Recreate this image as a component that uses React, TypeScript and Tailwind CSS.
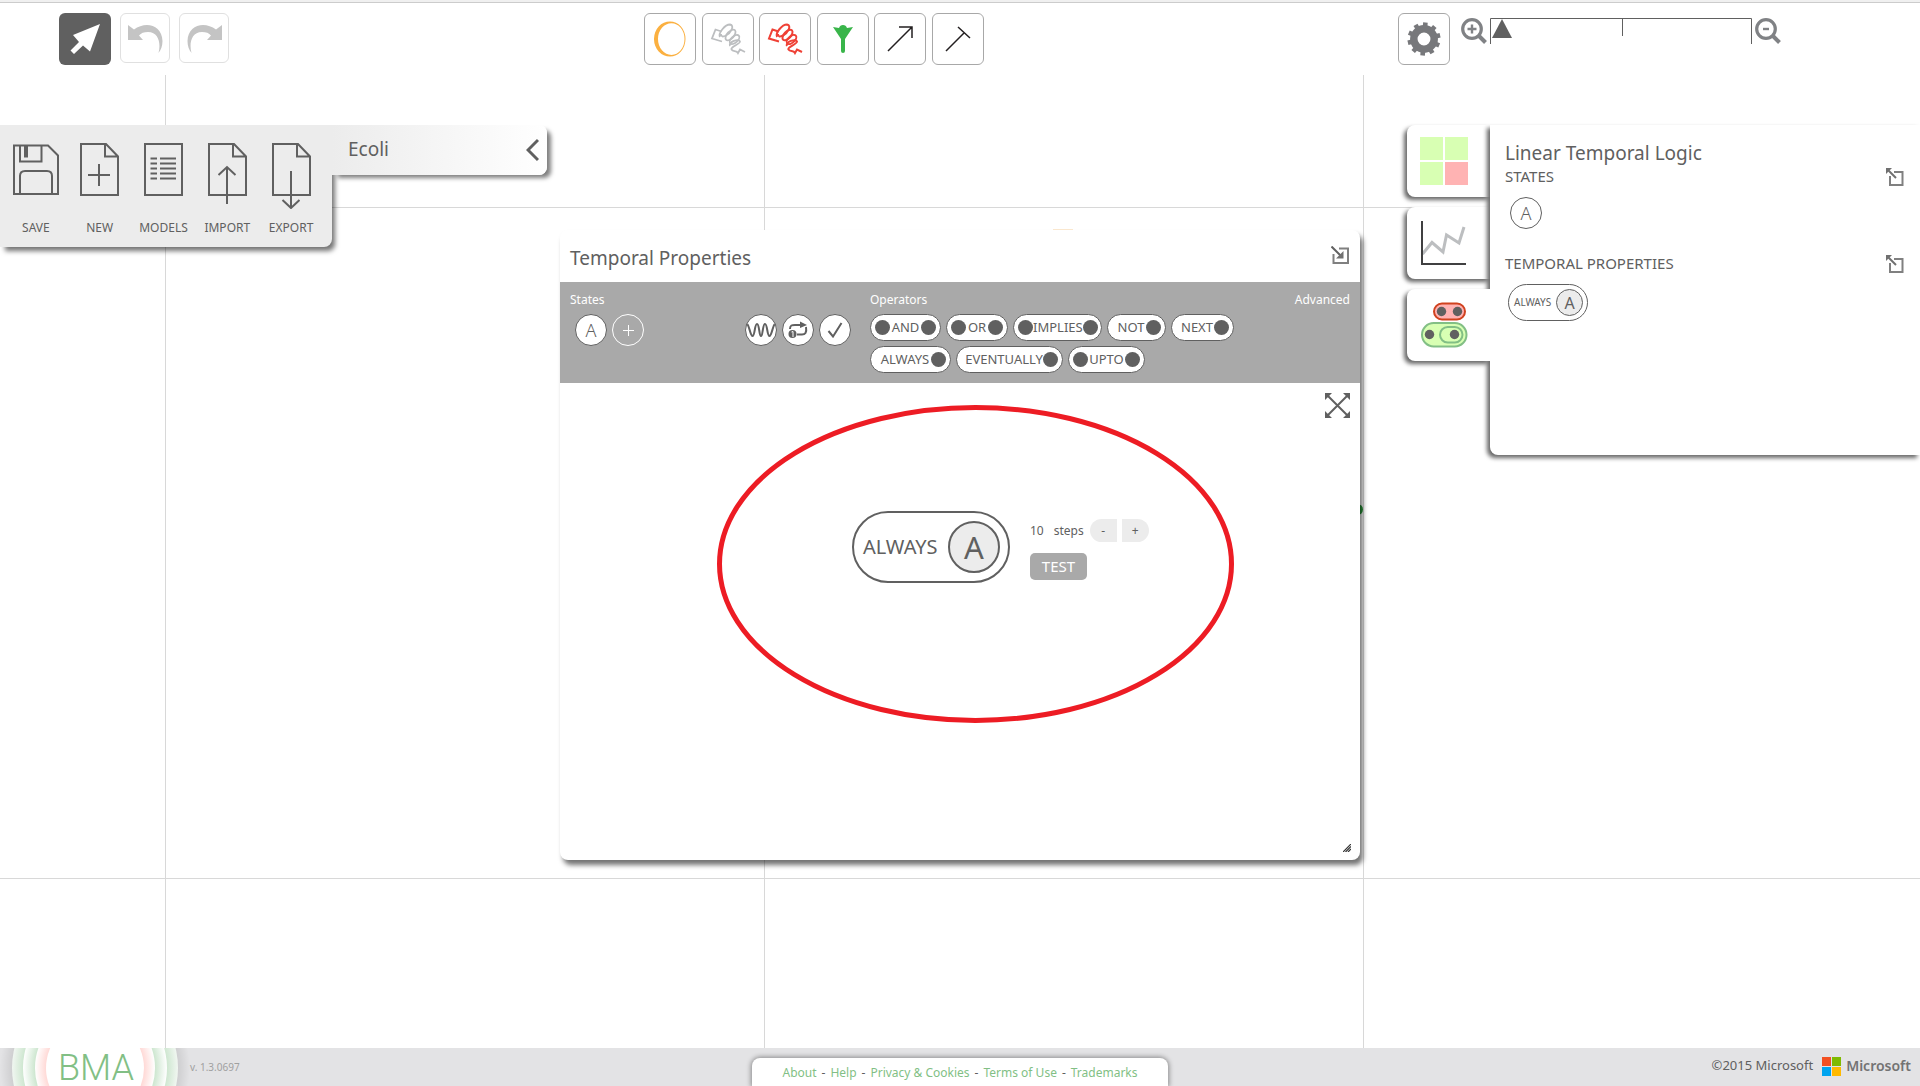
import React from "react";

const GREY = "#606060";

function Svg({ w, h, vb, children }: { w: number; h: number; vb?: string; children: React.ReactNode }) {
  return (
    <svg width={w} height={h} viewBox={vb ?? `0 0 ${w} ${h}`} fill="none" aria-hidden="true" className="block shrink-0">
      {children}
    </svg>
  );
}

/* ---------- toolbar ---------- */

function Spring({ color, weight }: { color: string; weight: number }) {
  return (
    <Svg w={36} h={32} vb="-1 -1 36 32">
      <g stroke={color} strokeWidth={weight}>
        <path d="M11 17.500 L1 14.500 L4.500 5.500 L10.500 7.500" />
        <path d="M9 13 C7 9 14 0.500 19 0.500 C24 1.500 20 9 15 11.500 C12 13 10 13 10 10" />
        <ellipse cx="19.500" cy="11" rx="6.500" ry="3.400" transform="rotate(-48 19.500 11)" />
        <ellipse cx="23.500" cy="15.500" rx="5.800" ry="3.200" transform="rotate(-42 23.500 15.500)" />
        <path d="M19 22 C17 18 28 14 29 17.500 C29.500 20 19 23 20.500 25.500 C22 28 25.500 26 27 29 L29 25.500 L34 28" />
      </g>
    </Svg>
  );
}

const TOOLS: { label: string; icon: React.ReactNode }[] = [
  {
    label: "Cell",
    icon: (
      <Svg w={32} h={36}>
        <path fillRule="evenodd" d="M16 0.5 A16 17.5 0 1 0 16 35.500 A15.500 17.500 0 1 0 16 0.500 Z M17.500 2.200 A13 15.900 0 1 1 17.500 34 A13.500 15.900 0 1 1 17.500 2.200 Z" fill="#fbb040" />
      </Svg>
    ),
  },
  { label: "Inactive receptor", icon: <Spring color="#bcbec0" weight={1.8} /> },
  { label: "Active receptor", icon: <Spring color="#ef4136" weight={2} /> },
  {
    label: "Membrane receptor",
    icon: (
      <Svg w={20} h={28}>
        <path d="M0 2 L6 3 Q7 0 10 0 Q13 0 14 3 L20 2 L12 14 V26 Q12 28 10 28 Q8 28 8 26 V14 Z" fill="#39b54a" />
      </Svg>
    ),
  },
  { label: "Activator", icon: <Svg w={26} h={26}><path d="M1 25 L25 1 M12 1 H25 V12" stroke="#231f20" strokeWidth="1.500" /></Svg> },
  { label: "Inhibitor", icon: <Svg w={26} h={26}><path d="M1 25 L19 7 M13 1 L25 12" stroke="#231f20" strokeWidth="1.500" /></Svg> },
];

function Gear() {
  return (
    <Svg w={34} h={34} vb="-17 -17 34 34">
      <circle r="10.200" stroke="#77787b" strokeWidth="7.500" />
      {[0, 36, 72, 108, 144, 180, 216, 252, 288, 324].map((a) => (
        <rect key={a} x="-2.300" y="-16.500" width="4.600" height="5" fill="#77787b" transform={`rotate(${a + 5})`} />
      ))}
    </Svg>
  );
}

function Magnifier({ plus }: { plus?: boolean }) {
  return (
    <Svg w={26} h={26}>
      <circle cx="11" cy="11" r="9.300" stroke="#808285" strokeWidth="3.200" />
      <path d={plus ? "M6.500 11 H15.500 M11 6.500 V15.500" : "M8 11 H14"} stroke="#808285" strokeWidth="2.400" />
      <path d="M17.500 17.500 L24.500 24.500" stroke="#808285" strokeWidth="4" />
    </Svg>
  );
}

const CURVED_ARROW = "M0 1 L6 5.500 C17 -3 34 0 34.500 17 C34.500 22 33 26 30.500 29 C33 20 31 8 20 8 C16 8 13 9 11 11.500 L15 16 H0 Z";

function TopBar() {
  return (
    <header className="grid h-[75px] grid-cols-[644fr_754fr_522fr] grid-rows-[1px_1fr] items-start border-t-2 border-[#f0f0f0] bg-white">
      <div className="col-span-3 h-px w-full bg-[#cccccc]" />
      <div className="flex gap-[9px] pt-2.5 pl-[59px]">
        <button aria-label="Select" className="flex size-[52px] items-center justify-center rounded-md bg-[#606060]">
          <Svg w={30} h={30}>
            <path d="M30 0 L20 27.500 L13 21.500 L4 30 L0.500 26.500 L9 18 L3 11 Z" fill="#fff" />
          </Svg>
        </button>
        <button aria-label="Undo" className="flex size-[50px] items-center justify-center rounded-md border border-[#e0e0e0]">
          <Svg w={35} h={29}>
            <path d={CURVED_ARROW} fill="#c4c4c4" />
          </Svg>
        </button>
        <button aria-label="Redo" className="flex size-[50px] items-center justify-center rounded-md border border-[#e0e0e0]">
          <Svg w={35} h={29}>
            <path transform="translate(35 0) scale(-1 1)" d={CURVED_ARROW} fill="#c4c4c4" />
          </Svg>
        </button>
      </div>
      <div className="flex w-[340px] justify-between pt-2.5">
        {TOOLS.map((t) => (
          <button key={t.label} aria-label={t.label} className="flex size-[52px] items-center justify-center rounded-md border border-[#a8a8a8]">
            {t.icon}
          </button>
        ))}
      </div>
      <div className="flex pt-2.5">
        <button aria-label="Settings" className="flex size-[52px] items-center justify-center rounded-md border border-[#a8a8a8]">
          <Gear />
        </button>
        <div className="ml-[11px] flex items-start gap-[3px] pt-[5px]">
          <button aria-label="Zoom in"><Magnifier plus /></button>
          <Svg w={262} h={26}>
            <path d="M0.500 26 V0.500 H261.500 V26 M132.500 0.500 V18" stroke={GREY} />
            <path d="M12 1 L22 20 H2 Z" fill={GREY} />
          </Svg>
          <button aria-label="Zoom out"><Magnifier /></button>
        </div>
      </div>
    </header>
  );
}

/* ---------- model panel ---------- */

const PAGE = "M1 1 H26 L38 13.500 V52 H1 Z M25 1 V13.500 H38";

const ACTIONS: { label: string; icon: React.ReactNode }[] = [
  {
    label: "SAVE",
    icon: (
      <Svg w={46} h={66}>
        <path d="M1 2.500 H35 L45 12.500 V51 H1 Z M7 2.500 V18.500 H28.500 V2.500 M7 51 V33 Q7 28 12 28 H34 Q39 28 39 33 V51" stroke={GREY} strokeWidth="2" />
        <path d="M13 2.500 V14.500" stroke={GREY} strokeWidth="4" />
      </Svg>
    ),
  },
  { label: "NEW", icon: <Svg w={39} h={66}><path d={PAGE + " M8 32 H30 M19 21 V43"} stroke={GREY} strokeWidth="2" /></Svg> },
  {
    label: "MODELS",
    icon: (
      <Svg w={39} h={66}>
        <path d="M1 1 H38 V52 H1 Z M6.500 15.500 H13 M16 15.500 H32 M6.500 20.500 H13 M16 20.500 H32 M6.500 25.500 H13 M16 25.500 H32 M6.500 30.500 H13 M16 30.500 H32 M6.500 35.500 H13 M16 35.500 H32" stroke={GREY} strokeWidth="2" />
      </Svg>
    ),
  },
  { label: "IMPORT", icon: <Svg w={39} h={66}><path d={PAGE + " M19 61 V24 M10.500 32 L19 24 L27.500 32"} stroke={GREY} strokeWidth="2" /></Svg> },
  { label: "EXPORT", icon: <Svg w={39} h={66}><path d={PAGE + " M19 28 V65 M10.500 57 L19 65 L27.500 57"} stroke={GREY} strokeWidth="2" /></Svg> },
];

function ModelPanel() {
  return (
    <section className="relative z-10 flex w-[547px] shrink-0 items-start">
      <div className="z-10 grid h-[122px] w-[332px] grid-cols-5 rounded-br-lg bg-[#ececec] pr-[9px] pl-1 shadow-[4px_5px_5px_-1px_rgba(0,0,0,0.55)]">
        {ACTIONS.map((a) => (
          <button key={a.label} className="flex flex-col items-center pt-[18px] text-xs leading-4">
            {a.icon}
            <span className="mt-[11px]">{a.label}</span>
          </button>
        ))}
      </div>
      <div className="relative z-10 flex h-[50px] flex-1 items-center justify-between rounded-r-lg bg-linear-to-r from-[#ececec] to-white pr-2 pl-4 shadow-[5px_4px_4px_-1px_rgba(0,0,0,0.5)]">
        <h1 className="pb-[2px] text-[19px] leading-6">Ecoli</h1>
        <button aria-label="Collapse panel">
          <Svg w={13} h={24}><path d="M12 2 L2 12 L12 22" stroke={GREY} strokeWidth="3" /></Svg>
        </button>
      </div>
    </section>
  );
}

/* ---------- temporal properties window ---------- */

type Op = { name: string; width: string; left: boolean };
const OPERATORS: Op[][] = [
  [
    { name: "AND", width: "w-[71px]", left: true },
    { name: "OR", width: "w-[62px]", left: true },
    { name: "IMPLIES", width: "w-[89px]", left: true },
    { name: "NOT", width: "w-[59px]", left: false },
    { name: "NEXT", width: "w-[63px]", left: false },
  ],
  [
    { name: "ALWAYS", width: "w-[81px]", left: false },
    { name: "EVENTUALLY", width: "w-[107px]", left: false },
    { name: "UPTO", width: "w-[77px]", left: true },
  ],
];

function Dot() {
  return <span className="size-[15px] shrink-0 rounded-full bg-[#606060]" />;
}

function Round({ label, children, outline }: { label: string; children: React.ReactNode; outline?: boolean }) {
  return (
    <button
      aria-label={label}
      className={
        outline
          ? "flex size-8 items-center justify-center rounded-full border border-white text-white"
          : "flex size-8 items-center justify-center overflow-hidden rounded-full border border-[#606060] bg-white"
      }
    >
      {children}
    </button>
  );
}

function OperatorBar() {
  return (
    <div className="flex h-[101px] bg-[#a9a9a9] pt-2 pr-[10px] pl-[10px]">
      <div className="w-[175px]">
        <h3 className="text-xs leading-5 text-white">States</h3>
        <div className="mt-1 flex gap-[5px] pl-[5px]">
          <Round label="State A"><span className="text-lg font-light">A</span></Round>
          <Round label="Add state" outline>
            <Svg w={11} h={11}><path d="M0 5.500 H11 M5.500 0 V11" stroke="#fff" /></Svg>
          </Round>
        </div>
      </div>
      <div className="flex w-[125px] gap-[5px] pt-6">
        <Round label="Oscillation">
          <Svg w={30} h={16}>
            <path d="M0 2 C3 0 4 14 6.500 14 C9 14 8.500 2 11 2 C13.500 2 13 14 15 14 C17 14 16.500 2 19 2 C21.500 2 21 14 23.500 14 C26 14 27 0 30 2" stroke={GREY} strokeWidth="2" />
          </Svg>
        </Round>
        <Round label="Self loop">
          <Svg w={20} h={18}>
            <path d="M2 8 C2 4 4 4 7 4 H13 M18 6 C19 12 17 13.500 14 13.500 H9" stroke={GREY} strokeWidth="2" />
            <path d="M12 0.500 L19 4 L12 7 Z" fill={GREY} />
            <circle cx="4.500" cy="13" r="4" fill={GREY} />
            <path d="M3.500 11 L5 10.500 V16" stroke="#fff" />
          </Svg>
        </Round>
        <Round label="Fixed point">
          <Svg w={16} h={16}><path d="M1.500 9 L6 14.500 L14.500 1" stroke={GREY} strokeWidth="2" /></Svg>
        </Round>
      </div>
      <div className="flex-1">
        <div className="flex justify-between text-xs leading-5 text-white">
          <h3>Operators</h3>
          <button>Advanced</button>
        </div>
        <div className="mt-1 flex flex-col gap-[5px]">
          {OPERATORS.map((row) => (
            <div key={row[0].name} className="flex gap-[5px]">
              {row.map((op) => (
                <button
                  key={op.name}
                  className={`${op.width} ${op.left ? "pl-1" : "pl-2"} flex h-[27px] items-center justify-between rounded-full border border-[#606060] bg-white pr-1 pb-px text-[13px] leading-4`}
                >
                  {op.left && <Dot />}
                  <span className="flex-1 text-center whitespace-nowrap">{op.name}</span>
                  <Dot />
                </button>
              ))}
            </div>
          ))}
        </div>
      </div>
    </div>
  );
}

function PropertiesWindow() {
  return (
    <section className="mt-[105px] mr-[47px] ml-[13px] flex h-[630px] min-w-0 flex-1 flex-col rounded-lg bg-white shadow-[3px_5px_5px_rgba(0,0,0,0.55)]">
      <div className="flex h-[52px] items-start justify-between pt-3 pr-[11px] pl-[10px]">
        <h2 className="text-[19px] leading-8">Temporal Properties</h2>
        <button aria-label="Collapse window" className="pt-1">
          <Svg w={18} h={18}>
            <path d="M8 2.500 H17 V17 H2.500 V8" stroke="#808080" strokeWidth="2" />
            <path d="M0.500 0.500 L10 10" stroke="#606060" strokeWidth="2" />
            <path d="M12.500 5 V12.500 H5 Z" fill="#707070" />
          </Svg>
        </button>
      </div>
      <OperatorBar />
      <div className="relative flex-1">
        <button aria-label="Fit to view" className="absolute top-[10px] right-[10px]">
          <Svg w={25} h={25}>
            <path d="M3 3 L22 22 M22 3 L3 22" stroke={GREY} strokeWidth="2" />
            <path d="M0 0 H7 L0 7 Z M25 0 V7 L18 0 Z M0 25 V18 L7 25 Z M25 25 H18 L25 18 Z" fill={GREY} />
          </Svg>
        </button>
        <svg className="pointer-events-none absolute top-[21px] left-[157px]" width="518" height="320" viewBox="0 0 518 320" fill="none" aria-hidden="true">
          <ellipse cx="258.500" cy="160" rx="256" ry="156.500" stroke="#ed1c24" strokeWidth="5" />
        </svg>
        <div className="flex items-start gap-5 pt-[128px] pl-[292px]">
          <div className="flex h-[72px] w-[158px] items-center justify-between rounded-full border-2 border-[#606060] pr-2 pl-[9px]">
            <span className="text-xl">ALWAYS</span>
            <span className="flex size-[52px] items-center justify-center rounded-full border-2 border-[#606060] bg-[#ececec] text-[31px]">A</span>
          </div>
          <div className="pt-2">
            <div className="flex items-center text-xs leading-[23px]">
              <span>10</span>
              <span className="ml-[10px]">steps</span>
              <button aria-label="Fewer steps" className="ml-[6px] h-[23px] w-[27px] rounded-l-full bg-[#ececec]">-</button>
              <button aria-label="More steps" className="ml-[5px] h-[23px] w-[27px] rounded-r-full bg-[#ececec]">+</button>
            </div>
            <button className="mt-[11px] h-[27px] w-[57px] rounded-[5px] bg-[#a9a9a9] text-[15px] text-white">TEST</button>
          </div>
        </div>
        <div className="absolute right-[9px] bottom-2">
          <Svg w={8} h={8}><path d="M0 8 L8 0 M2.500 8 L8 2.500 M5 8 L8 5" stroke="#333" strokeWidth="1.200" /></Svg>
        </div>
      </div>
    </section>
  );
}

/* ---------- logic panel ---------- */

function ExpandButton({ label }: { label: string }) {
  return (
    <button aria-label={label}>
      <Svg w={18} h={18}>
        <path d="M8 4 H16.500 V17 H4 V8" stroke="#808080" strokeWidth="2" />
        <path d="M2 2 L10 10" stroke="#707070" strokeWidth="2" />
        <path d="M0 0 H6 L0 6 Z" fill="#707070" />
      </Svg>
    </button>
  );
}

const TAB = "flex h-[72px] items-center rounded-l-lg bg-white pl-[13px]";
const TAB_SHADOW = "shadow-[-3px_3px_4px_rgba(0,0,0,0.6)]";

function LogicPanel() {
  return (
    <section className="flex w-[513px] shrink-0 items-start">
      <div className="flex w-[83px] flex-col gap-[10px]">
        <button aria-label="Proof" className={`${TAB} ${TAB_SHADOW}`}>
          <Svg w={48} h={48}>
            <path d="M0 0 H23 V23 H0 Z M25 0 H48 V23 H25 Z M0 25 H23 V48 H0 Z" fill="#d8ffb3" />
            <path d="M25 25 H48 V48 H25 Z" fill="#ffb3b3" />
          </Svg>
        </button>
        <button aria-label="Simulation" className={`${TAB} ${TAB_SHADOW}`}>
          <Svg w={48} h={46}>
            <path d="M2.500 34 L12 22.500 L23 32 L26.500 15 L39 23 L44 7" stroke="#bcbec0" strokeWidth="3" />
            <path d="M2 1 V44 H46" stroke="#404041" strokeWidth="2" />
          </Svg>
        </button>
        <button aria-label="Linear temporal logic" className={`${TAB} ${TAB_SHADOW}`}>
          <Svg w={48} h={46}>
            <rect x="14" y="1.500" width="31" height="16" rx="8" fill="#ffb3b3" stroke="#d0421f" strokeWidth="2" />
            <circle cx="21.500" cy="9.500" r="4.700" fill={GREY} />
            <circle cx="37.500" cy="9.500" r="4.700" fill={GREY} />
            <rect x="2" y="21" width="44.500" height="23.500" rx="11.700" fill="#d8ffb3" stroke="#82bf85" strokeWidth="2" />
            <rect x="20" y="25" width="22.500" height="15.500" rx="7.700" stroke="#82bf85" strokeWidth="2" />
            <circle cx="9.500" cy="32.500" r="4.700" fill={GREY} />
            <circle cx="34.500" cy="32.500" r="4.700" fill={GREY} />
          </Svg>
        </button>
      </div>
      <div className="relative flex-1">
        <div className="absolute top-[164px] -left-2 h-[72px] w-2 bg-white" />
        <div className="h-[330px] rounded-bl-lg bg-white pt-3 pr-4 pl-[15px] shadow-[-3px_3px_4px_rgba(0,0,0,0.6)]">
          <h2 className="pt-[2px] text-[19px] leading-7">Linear Temporal Logic</h2>
          <div className="flex items-center justify-between text-[15px] leading-[18px]">
            <h3 className="pb-[2px]">STATES</h3>
            <ExpandButton label="Expand states" />
          </div>
          <div className="mt-[10px] ml-[5px] flex size-8 items-center justify-center rounded-full border border-[#606060] text-lg font-light">A</div>
          <div className="mt-[25px] flex items-center justify-between text-[15px] leading-[18px]">
            <h3 className="pb-[2px]">TEMPORAL PROPERTIES</h3>
            <ExpandButton label="Expand temporal properties" />
          </div>
          <div className="mt-[10px] ml-[3px] flex h-[37px] w-20 items-center justify-between rounded-full border border-[#606060] pr-1 pl-[5px]">
            <span className="text-[10px]">ALWAYS</span>
            <span className="flex size-[27px] items-center justify-center rounded-full border border-[#606060] bg-[#ececec] text-base">A</span>
          </div>
        </div>
      </div>
    </section>
  );
}

/* ---------- footer ---------- */

const LINKS = ["About", "Help", "Privacy & Cookies", "Terms of Use", "Trademarks"];

function Footer() {
  return (
    <footer className="relative z-10 grid h-[38px] grid-cols-[752fr_416fr_752fr] bg-[#e3e3e5]">
      <div className="flex items-center gap-3">
        <div className="relative flex h-[38px] w-[178px] items-center pl-[58px]">
          <svg className="absolute top-0 left-0" width="190" height="38" viewBox="0 0 190 38" fill="none" aria-hidden="true">
            <defs>
              <radialGradient id="halo" gradientUnits="userSpaceOnUse" cx="95" cy="20" r="95">
                <stop offset="0.86" stopColor="#000" stopOpacity="0.1" />
                <stop offset="1" stopColor="#000" stopOpacity="0" />
              </radialGradient>
              <radialGradient id="outer" gradientUnits="userSpaceOnUse" cx="95" cy="20" r="84">
                <stop offset="0.86" stopColor="#cfe7d1" />
                <stop offset="1" stopColor="#f4f8f4" />
              </radialGradient>
              <radialGradient id="middle" gradientUnits="userSpaceOnUse" cx="95" cy="20" r="72">
                <stop offset="0.840" stopColor="#cfe7d1" />
                <stop offset="1" stopColor="#ffffff" />
              </radialGradient>
              <radialGradient id="inner" gradientUnits="userSpaceOnUse" cx="95" cy="20" r="60">
                <stop offset="0.820" stopColor="#ffdad7" />
                <stop offset="1" stopColor="#ffffff" />
              </radialGradient>
            </defs>
            <circle cx="95" cy="20" r="95" fill="url(#halo)" />
            <circle cx="95" cy="20" r="83" fill="url(#outer)" />
            <circle cx="95" cy="20" r="72" fill="url(#middle)" />
            <circle cx="95" cy="20" r="60" fill="url(#inner)" />
            <circle cx="95" cy="20" r="49" fill="#fff" />
          </svg>
          <span className="relative pt-[2px] font-[Roboto] text-4xl leading-[34px] font-light text-[#82bf85]">BMA</span>
        </div>
        <span className="text-[10px] text-[#a0a0a0]">v. 1.3.0697</span>
      </div>
      <nav className="mt-[10px] flex items-center justify-center gap-[5px] rounded-t-lg bg-white pt-[2px] text-xs whitespace-nowrap shadow-[0_0_5px_1px_rgba(0,0,0,0.4)]">
        {LINKS.map((l, i) => (
          <React.Fragment key={l}>
            {i > 0 && <span>-</span>}
            <a href="#" className="text-[#82bf85]">{l}</a>
          </React.Fragment>
        ))}
      </nav>
      <div className="flex items-center justify-end gap-[9px] pr-[9px] pb-[2px]">
        <span className="text-[13px]">©2015 Microsoft</span>
        <div className="flex items-center gap-[5px]">
          <Svg w={19} h={19}>
            <path d="M0 0 H9 V9 H0 Z" fill="#f25022" />
            <path d="M10 0 H19 V9 H10 Z" fill="#7fba00" />
            <path d="M0 10 H9 V19 H0 Z" fill="#00a4ef" />
            <path d="M10 10 H19 V19 H10 Z" fill="#ffb900" />
          </Svg>
          <span className="text-sm font-semibold text-[#737373]">Microsoft</span>
        </div>
      </div>
    </footer>
  );
}

/* ---------- drawing surface ---------- */

function Canvas() {
  return (
    <>
      <div className="absolute inset-0 grid grid-cols-[166fr_599fr_599fr_556fr]" aria-hidden="true">
        <div className="border-r border-[#d8d8d8]" />
        <div className="border-r border-[#d8d8d8]" />
        <div className="border-r border-[#d8d8d8]" />
      </div>
      <div className="absolute inset-x-0 top-[132px] h-[672px] border-y border-[#d8d8d8]" aria-hidden="true" />
      <div className="absolute top-[154px] left-[1053px] h-px w-5 bg-[#fbe8cf]" aria-hidden="true" />
      <div className="absolute top-[429px] left-[1352px] size-[11px] rounded-full bg-[#2b9a3c]" aria-hidden="true" />
    </>
  );
}

export default function App() {
  return (
    <div className="flex min-h-screen flex-col bg-white font-['Noto_Sans',sans-serif] text-[#606060]">
      <TopBar />
      <main className="relative flex flex-1 items-start pt-[50px]">
        <Canvas />
        <div className="relative flex w-full items-start">
          <ModelPanel />
          <PropertiesWindow />
          <LogicPanel />
        </div>
      </main>
      <Footer />
    </div>
  );
}
